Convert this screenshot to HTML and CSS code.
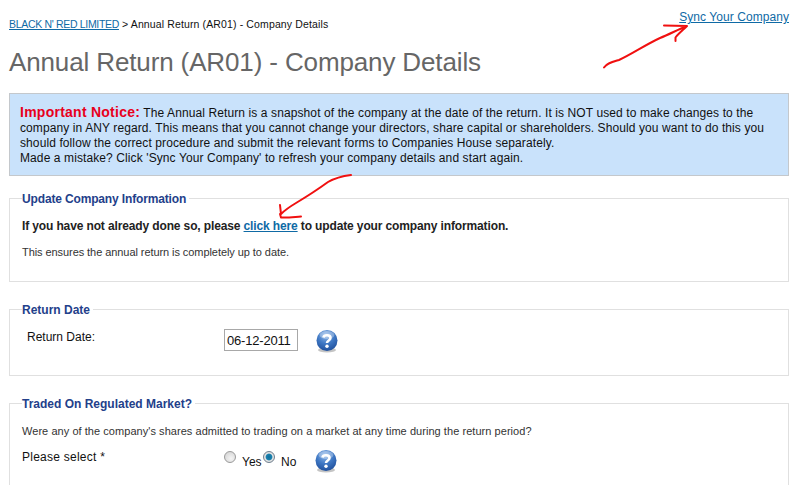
FILE: index.html
```html
<!DOCTYPE html>
<html lang="en">
<head>
<meta charset="utf-8">
<title>Annual Return (AR01) - Company Details</title>
<link rel="stylesheet" href="styles.css">
</head>
<body>
<div class="page">
  <header class="top">
    <div class="crumbs"><a href="#">BLACK N' RED LIMITED</a> &gt; Annual Return (AR01) - Company Details</div>
    <a class="sync" href="#">Sync Your Company</a>
  </header>
  <h1>Annual Return (AR01) - Company Details</h1>
  <div class="notice">
    <strong>Important Notice:</strong> The Annual Return is a snapshot of the company at the date of the return. It is NOT used to make changes to the<br>
    company in ANY regard. This means that you cannot change your directors, share capital or shareholders. Should you want to do this you<br>
    should follow the correct procedure and submit the relevant forms to Companies House separately.<br>
    Made a mistake? Click 'Sync Your Company' to refresh your company details and start again.
  </div>

  <fieldset class="box box-update">
    <legend>Update Company Information</legend>
    <p class="lead">If you have not already done so, please <a href="#">click here</a> to update your company information.</p>
    <p class="small">This ensures the annual return is completely up to date.</p>
  </fieldset>

  <fieldset class="box box-date">
    <legend>Return Date</legend>
    <div class="row row-date">
      <label class="field-label" for="rd">Return Date:</label>
      <input class="date" id="rd" type="text" value="06-12-2011">
      <svg class="help" viewBox="0 0 24 24" aria-hidden="true"><use href="#help"></use></svg>
    </div>
  </fieldset>

  <fieldset class="box box-market">
    <legend>Traded On Regulated Market?</legend>
    <p class="small">Were any of the company's shares admitted to trading on a market at any time during the return period?</p>
    <div class="row row-select">
      <span class="field-label select-label">Please select *</span>
      <span class="radios">
        <input type="radio" name="m" id="y"><label for="y">Yes</label>
        <input type="radio" name="m" id="n" checked><label for="n">No</label>
      </span>
      <svg class="help" viewBox="0 0 24 24" aria-hidden="true"><use href="#help"></use></svg>
    </div>
  </fieldset>
</div>

<svg class="ink" viewBox="0 0 807 485" aria-hidden="true">
  <path d="M604 67.500C607 63 612 62 619 60C632 54 645 45 660 38C670 34 677 30 687 26L664 25.500M687 26C683 30 678 34 675.500 37.500L675.500 41"></path>
  <path d="M351 175C343 176 335 178 328 182C317 190 306 197 296 203C291 206 285 210 281 214L280 205M280 214L281 217.500C287 218 294 217 301 216.500"></path>
</svg>

<svg class="defs" width="0" height="0" aria-hidden="true">
  <defs>
    <radialGradient id="ball" cx="45%" cy="25%" r="80%">
      <stop offset="0" stop-color="#8fb8ea"></stop>
      <stop offset="0.5" stop-color="#3f78c4"></stop>
      <stop offset="1" stop-color="#1c4b98"></stop>
    </radialGradient>
    <symbol id="help" viewBox="0 0 24 24">
      <ellipse cx="12" cy="21" rx="9" ry="2.500" fill="#8a8a8a" opacity="0.5"></ellipse>
      <circle cx="12" cy="11.500" r="10.500" fill="url(#ball)"></circle>
      <ellipse cx="12" cy="6" rx="7.500" ry="4" fill="#fff" opacity="0.3"></ellipse>
      <path d="M8.500 8.500C9 5.500 15.500 5.500 15.500 9C15.500 11.500 12 11.500 12 14" fill="none" stroke="#fff" stroke-width="2.600"></path>
      <circle cx="12" cy="17.300" r="1.700" fill="#fff"></circle>
    </symbol>
  </defs>
</svg>
</body>
</html>
```
FILE: styles.css
```css
html, body {
  margin: 0;
  height: 485px;
  overflow: hidden;
  background: #fff;
}
body {
  font-family: "Liberation Sans", Arial, sans-serif;
  font-size: 12px;
  color: #111;
  position: relative;
}
a { color: #0f6aa5; }
.page { padding: 0 18px 0 9px; }
.top {
  display: flex;
  justify-content: space-between;
  align-items: flex-start;
  height: 46px;
}
.crumbs { font-size: 10.500px; line-height: 13px; padding-top: 18px; letter-spacing: 0.13px; }
.crumbs a { letter-spacing: -0.32px; }
.sync { font-size: 12px; line-height: 14px; padding-top: 10px; letter-spacing: 0.06px; }
h1 {
  margin: 0 0 15px;
  font-weight: normal;
  font-size: 26px;
  line-height: 32px;
  letter-spacing: -0.13px;
  color: #666;
}
.notice {
  box-sizing: border-box;
  height: 83px;
  padding: 11px 10px 0;
  background: #c9e2fb;
  border: 1px solid #c4c8cc;
  line-height: 15px;
  letter-spacing: 0.1px;
}
.notice strong { color: #e8001c; font-size: 14px; line-height: 15px; letter-spacing: 0.25px; }
.box {
  margin: 0;
  padding: 0 12px;
  border: 1px solid #e0e0e0;
  min-width: 0;
}
legend {
  padding: 2px 3px 0 0;
  margin-left: 0;
  font-size: 12px;
  font-weight: bold;
  line-height: 14px;
  color: #23408a;
}
.box-update { height: 90px; margin-top: 14px; }
.box-update legend { letter-spacing: -0.15px; }
.box-date { height: 73px; margin-top: 19px; }
.box-market { height: 120px; margin-top: 19px; }
.lead { margin: 13px 0 0; font-weight: bold; line-height: 15px; color: #222; letter-spacing: -0.13px; }
.lead a { color: #0f6aa5; }
.small { margin: 12px 0 0; font-size: 11px; line-height: 13px; color: #333; letter-spacing: -0.07px; }
.box-market .small { margin-top: 14px; letter-spacing: 0.05px; }
.row { display: flex; align-items: flex-start; }
.field-label { width: 197px; flex: none; font-size: 12px; line-height: 14px; }
.row-date { padding: 5px 0 0 5px; }
.row-date .field-label { padding-top: 8px; }
.date {
  box-sizing: border-box;
  width: 74px;
  height: 22px;
  padding: 0 2px;
  border: 1px solid #a8a8a8;
  font: 13px "Liberation Sans", Arial, sans-serif;
  letter-spacing: -0.2px;
  color: #111;
  margin-top: 7px;
}
.help { width: 24px; height: 24px; flex: none; margin: 7px 0 0 17px; }
.row-select { padding-top: 11px; }
.select-label { width: 202px; padding-top: 1px; letter-spacing: 0.25px; }
.radios { display: flex; align-items: flex-start; width: 74px; }
.radios input {
  appearance: none;
  box-sizing: border-box;
  margin: 2px 0 0;
  width: 12px;
  height: 12px;
  flex: none;
  border: 1px solid #9a9a9a;
  border-radius: 50%;
  background: radial-gradient(circle at 60% 65%, #f4f4f4, #cfcfcf);
}
.radios input:checked {
  background: radial-gradient(circle, #0f6f9e 0, #1a80ad 40%, #e6e6e6 55%, #cfcfcf 100%);
  border-color: #6f7f8f;
}
.radios label { padding: 6px 0 0 6px; line-height: 14px; }
.radios label:first-of-type { width: 20px; padding-right: 1px; }
.row-select .help { margin: 0 0 0 16px; }
.ink {
  position: absolute;
  left: 0;
  top: 0;
  width: 807px;
  height: 485px;
  pointer-events: none;
}
.ink path {
  fill: none;
  stroke: #f01010;
  stroke-width: 2;
  stroke-linecap: round;
  stroke-linejoin: round;
}
.defs { position: absolute; }
```
